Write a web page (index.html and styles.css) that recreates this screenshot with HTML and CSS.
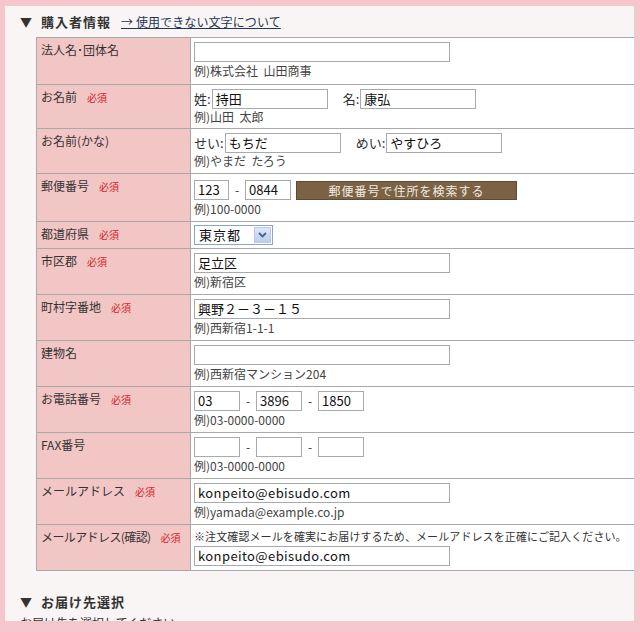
FILE: index.html
```html
<!DOCTYPE html>
<html lang="ja">
<head>
<meta charset="utf-8">
<link rel="stylesheet" href="styles.css">
</head>
<body>
<div class="panel">
  <h2 class="heading"><span class="tri">▼</span><span class="htext">購入者情報</span><a class="help" href="#">→ 使用できない文字について</a></h2>
  <table class="form">
    <colgroup><col class="c-label"><col class="c-field"></colgroup>
    <tr class="r47">
      <th>法人名･団体名</th>
      <td><div class="line"><span class="in w256"></span></div><div class="ex">例)株式会社&nbsp;&nbsp;山田商事</div></td>
    </tr>
    <tr class="r44">
      <th>お名前<span class="req">必須</span></th>
      <td><div class="line"><span class="pre">姓:</span><span class="in w116">持田</span><span class="pre gap">名:</span><span class="in w116">康弘</span></div><div class="ex">例)山田&nbsp;&nbsp;太郎</div></td>
    </tr>
    <tr class="r45">
      <th>お名前(かな)</th>
      <td><div class="line"><span class="pre">せい:</span><span class="in w116">もちだ</span><span class="pre gap">めい:</span><span class="in w116">やすひろ</span></div><div class="ex">例)やまだ&nbsp;&nbsp;たろう</div></td>
    </tr>
    <tr class="r48">
      <th>郵便番号<span class="req">必須</span></th>
      <td><div class="line"><span class="in w35">123</span><span class="dash">-</span><span class="in w46">0844</span><span class="btn">郵便番号で住所を検索する</span></div><div class="ex">例)100-0000</div></td>
    </tr>
    <tr class="rsel">
      <th>都道府県<span class="req">必須</span></th>
      <td><span class="sel"><span class="sel-text">東京都</span><span class="sel-arrow"><svg width="9" height="6" viewBox="0 0 9 6"><path d="M1 1 L4.5 4.5 L8 1" fill="none" stroke="#4d6185" stroke-width="1.8"/></svg></span></span></td>
    </tr>
    <tr>
      <th>市区郡<span class="req">必須</span></th>
      <td><div class="line"><span class="in w256">足立区</span></div><div class="ex">例)新宿区</div></td>
    </tr>
    <tr>
      <th>町村字番地<span class="req">必須</span></th>
      <td><div class="line"><span class="in w256">興野２－３－１５</span></div><div class="ex">例)西新宿1-1-1</div></td>
    </tr>
    <tr>
      <th>建物名</th>
      <td><div class="line"><span class="in w256"></span></div><div class="ex">例)西新宿マンション204</div></td>
    </tr>
    <tr>
      <th>お電話番号<span class="req">必須</span></th>
      <td><div class="line"><span class="in w46">03</span><span class="dash">-</span><span class="in w46">3896</span><span class="dash">-</span><span class="in w46">1850</span></div><div class="ex">例)03-0000-0000</div></td>
    </tr>
    <tr>
      <th>FAX番号</th>
      <td><div class="line"><span class="in w46"></span><span class="dash">-</span><span class="in w46"></span><span class="dash">-</span><span class="in w46"></span></div><div class="ex">例)03-0000-0000</div></td>
    </tr>
    <tr>
      <th>メールアドレス<span class="req">必須</span></th>
      <td><div class="line"><span class="in w256 mail">konpeito@ebisudo.com</span></div><div class="ex">例)yamada@example.co.jp</div></td>
    </tr>
    <tr>
      <th><span class="narrow">メールアドレス(確認)</span><span class="req">必須</span></th>
      <td><div class="note">※注文確認メールを確実にお届けするため、メールアドレスを正確にご記入ください。</div><div class="line"><span class="in w256 mail">konpeito@ebisudo.com</span></div></td>
    </tr>
  </table>
  <h2 class="heading heading2"><span class="tri">▼</span><span class="htext">お届け先選択</span></h2>
  <p class="sub">お届け先を選択してください。</p>
</div>
</body>
</html>
```

FILE: styles.css
```css
html, body {
  margin: 0;
  padding: 0;
}
body {
  background: #f5c7cc;
  height: 632px;
  overflow: hidden;
  font-family: "Noto Sans CJK JP", "Liberation Sans", sans-serif;
  font-size: 12px;
  color: #333;
}
.panel {
  margin: 6px 6px 0 5px;
  height: 615px;
  background: #f9f5f4;
  overflow: hidden;
}
.heading {
  margin: 0;
  padding: 8px 0 0 15px;
  font-size: 13px;
  line-height: 16px;
  height: 16px;
  font-weight: normal;
  display: flex;
  align-items: center;
  color: #333;
}
.tri {
  font-size: 12px;
  width: 16px;
  color: #333;
  margin-right: 5px;
}
.htext {
  font-weight: bold;
  letter-spacing: 1px;
}
.help {
  margin-left: 10px;
  font-size: 12px;
  color: #233456;
  text-decoration: underline;
  letter-spacing: 0.1px;
}
.form {
  margin: 7px 0 0 31px;
  border-collapse: collapse;
  table-layout: fixed;
  width: 620px;
}
.c-label { width: 154px; }
.form th, .form td {
  border: 1px solid #a9a9a9;
  vertical-align: top;
  text-align: left;
  padding: 4px 3px 4px 3px;
  line-height: 16px;
}
.form th {
  background: #f3c6c6;
  font-weight: normal;
  padding: 4px 3px 0 4px;
  color: #333;
  white-space: nowrap;
}
.form td {
  background: #fff;
}
.req {
  color: #d22525;
  font-size: 10px;
  line-height: 10px;
  margin-left: 10px;
}
.narrow { letter-spacing: -0.6px; }
.line {
  display: flex;
  align-items: center;
  height: 20px;
}
.in {
  box-sizing: border-box;
  display: inline-block;
  height: 20px;
  border: 1px solid #a5abb0;
  background: #fff;
  padding: 0 3px;
  font-size: 13px;
  line-height: 18px;
  color: #111;
  white-space: nowrap;
  overflow: hidden;
}
.mail { letter-spacing: 0.4px; }
.w256 { width: 256px; }
.w116 { width: 116px; }
.w35 { width: 35px; }
.w46 { width: 46px; }
.pre {
  font-size: 13px;
  line-height: 16px;
  color: #333;
  margin-right: 1px;
}
.gap { margin-left: 15px; }
.dash {
  width: 16px;
  text-align: center;
  font-size: 12px;
  line-height: 16px;
  color: #333;
}
.btn {
  box-sizing: border-box;
  display: inline-block;
  width: 221px;
  height: 19px;
  margin-left: 5px;
  background: #7b6245;
  border: 1px solid #5e4b33;
  color: #f3ece0;
  font-size: 12px;
  line-height: 17px;
  text-align: center;
  letter-spacing: 1px;
}
.ex {
  color: #444;
  font-size: 12px;
  line-height: 17px;
  height: 17px;
  overflow: visible;
}
.r47 td { padding-bottom: 5px; }
.r44 .ex { height: 15px; line-height: 15px; }
.r45 .ex { height: 16px; line-height: 16px; }
.r48 td { padding-top: 6px; }
.rsel td { padding: 3px 3px; }
.note {
  font-size: 11px;
  letter-spacing: 0.1px;
  line-height: 17px;
  height: 17px;
  color: #333;
  margin-top: -1px;
  margin-bottom: 1px;
  white-space: nowrap;
}
.sel {
  box-sizing: border-box;
  display: inline-flex;
  align-items: center;
  justify-content: space-between;
  width: 79px;
  height: 20px;
  border: 1px solid #8ca3c3;
  background: #fff;
  padding: 0 1px 0 4px;
  vertical-align: top;
}
.sel-text {
  font-size: 13px;
  line-height: 16px;
  color: #111;
  letter-spacing: 1px;
}
.sel-arrow {
  box-sizing: border-box;
  width: 17px;
  height: 16px;
  background: linear-gradient(#dde7fb, #bccdf3);
  border: 1px solid #b9c9ea;
  display: flex;
  align-items: center;
  justify-content: center;
}
.heading2 {
  padding-top: 23px;
}
.sub {
  margin: 5px 0 0 15px;
  font-size: 12px;
  line-height: 16px;
  color: #333;
}
```
